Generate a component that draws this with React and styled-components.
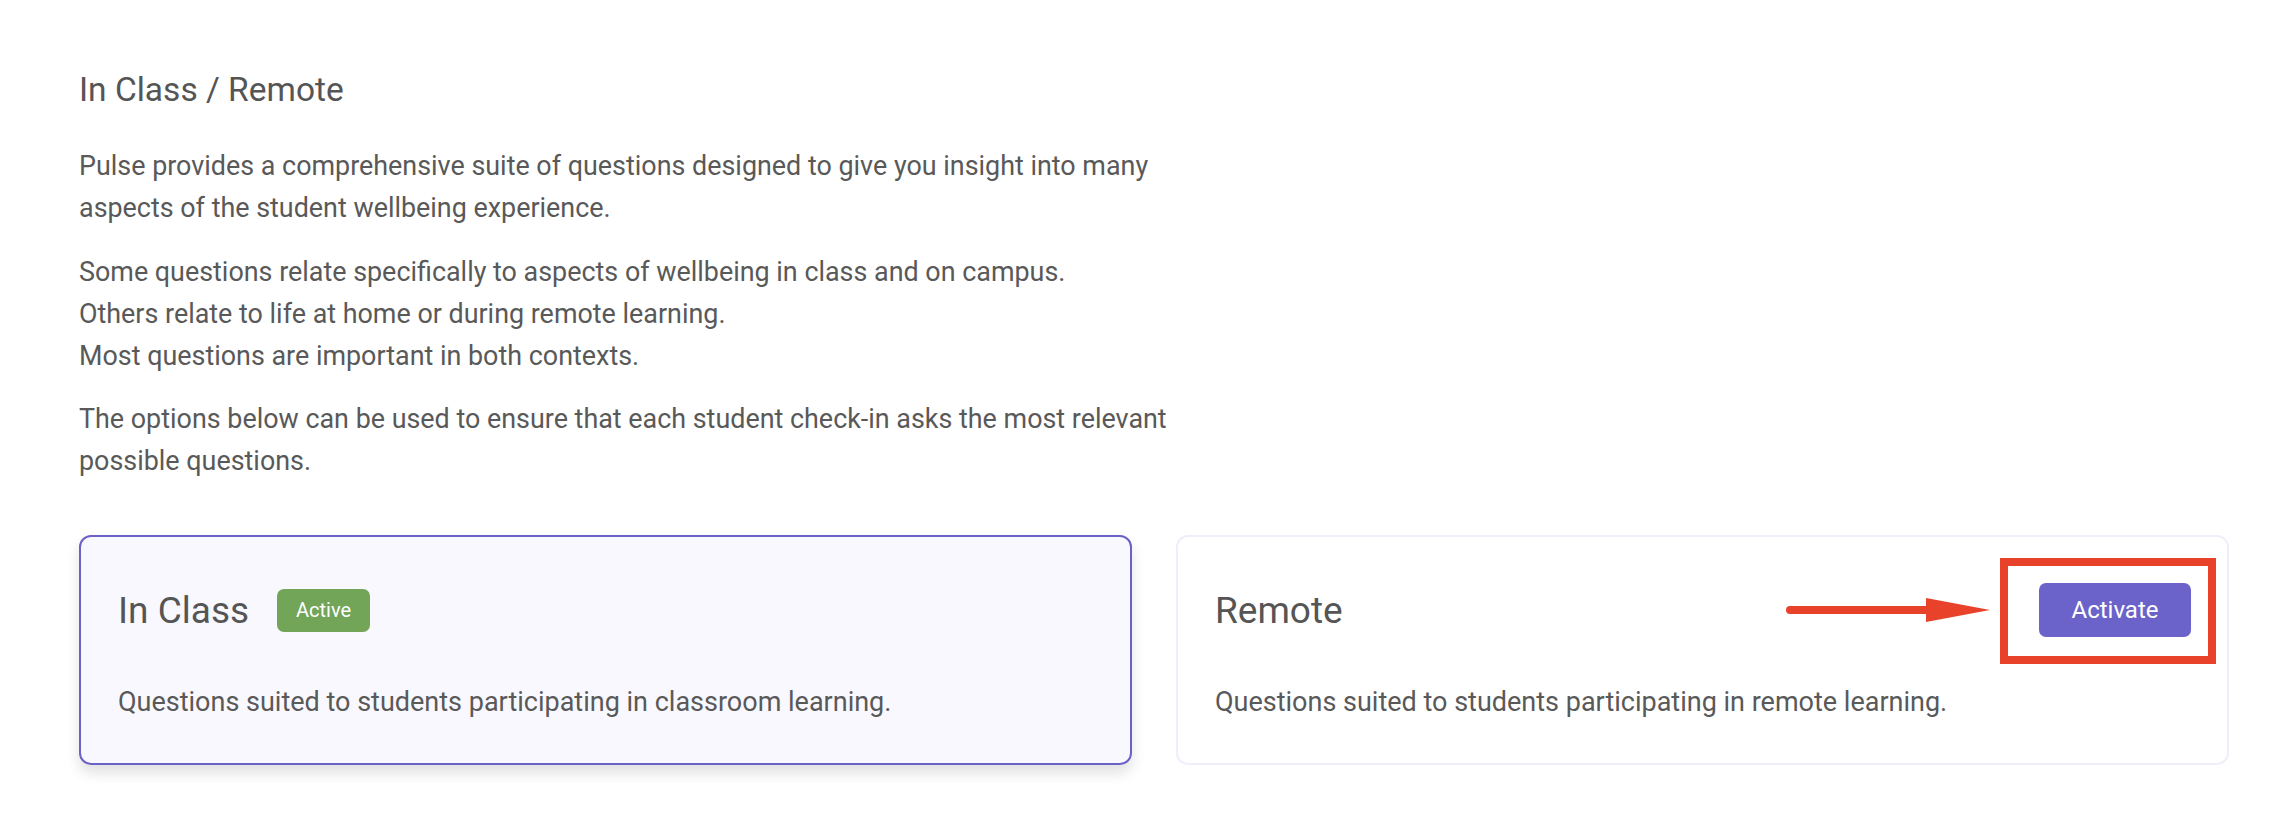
import React from 'react';
import styled, { createGlobalStyle } from 'styled-components';

const GlobalStyle = createGlobalStyle`
	html, body {
		margin: 0;
		padding: 0;
		background: #ffffff;
	}

	body {
		font-family: Roboto, 'Noto Sans', sans-serif;
		color: #575757;
	}
`;

const App = () => {
	return (
		<>
			<GlobalStyle />
			<Page>
				<Title>In Class / Remote</Title>
				<Intro>
					<Paragraph>
						Pulse provides a comprehensive suite of questions designed to give
						you insight into many aspects of the student wellbeing experience.
					</Paragraph>
					<Paragraph>
						Some questions relate specifically to aspects of wellbeing in class
						and on campus.
						<br />
						Others relate to life at home or during remote learning.
						<br />
						Most questions are important in both contexts.
					</Paragraph>
					<Paragraph>
						The options below can be used to ensure that each student check-in
						asks the most relevant possible questions.
					</Paragraph>
				</Intro>
				<Options>
					<OptionCard active>
						<CardHeader>
							<CardTitle>In Class</CardTitle>
							<Badge>Active</Badge>
						</CardHeader>
						<CardText>
							Questions suited to students participating in classroom learning.
						</CardText>
					</OptionCard>
					<OptionCard>
						<CardHeader>
							<CardTitle>Remote</CardTitle>
							<Spacer />
							<ButtonSlot>
								<Arrow viewBox='0 0 204 26' aria-hidden='true'>
									<line
										x1='4'
										y1='13'
										x2='145'
										y2='13'
										stroke='#e8422a'
										strokeWidth='8'
										strokeLinecap='round'
									/>
									<polygon points='140,1 204,13 140,25' fill='#e8422a' />
								</Arrow>
								<Highlight />
								<ActivateButton>Activate</ActivateButton>
							</ButtonSlot>
						</CardHeader>
						<CardText>
							Questions suited to students participating in remote learning.
						</CardText>
					</OptionCard>
				</Options>
			</Page>
		</>
	);
};

const Page = styled.div`
	padding: 66px 59px 40px 79px;
`;

const Title = styled.h2`
	margin: 0 0 31px;
	font-size: 33.5px;
	font-weight: 400;
	line-height: 48px;
	color: #555555;
`;

const Intro = styled.div`
	max-width: 1130px;
`;

const Paragraph = styled.p`
	margin: 0 0 21.5px;
	font-size: 26.9px;
	line-height: 42px;
	color: #595959;
`;

const Options = styled.div`
	display: grid;
	grid-template-columns: 1fr 1fr;
	gap: 44px;
	margin-top: 53px;
`;

const OptionCard = styled.div`
	box-sizing: border-box;
	height: 230px;
	padding: 50px 36px 0 37px;
	border-radius: 12px;
	border: ${({ active }) => (active ? '2px solid #6a62c7' : '2px solid #efeefb')};
	background: ${({ active }) => (active ? '#f9f8fe' : '#ffffff')};
	box-shadow: ${({ active }) =>
		active ? '0 8px 14px rgba(0, 0, 0, 0.12)' : 'none'};
`;

const CardHeader = styled.div`
	display: flex;
	align-items: center;
	height: 46px;
`;

const CardTitle = styled.h3`
	margin: 0;
	font-size: 37px;
	font-weight: 400;
	color: #555555;
`;

const Badge = styled.span`
	display: inline-flex;
	align-items: center;
	justify-content: center;
	box-sizing: border-box;
	width: 93px;
	height: 43px;
	margin-left: 28px;
	border-radius: 7px;
	background: #72a557;
	color: #ffffff;
	font-size: 20px;
`;

const Spacer = styled.div`
	flex: 1;
`;

const ButtonSlot = styled.div`
	position: relative;
`;

const ActivateButton = styled.button`
	display: block;
	width: 152px;
	height: 54px;
	border: none;
	border-radius: 7px;
	background: #6b63c9;
	color: #ffffff;
	font-family: Roboto, 'Noto Sans', sans-serif;
	font-size: 24px;
	cursor: pointer;
`;

const Highlight = styled.div`
	position: absolute;
	left: -39px;
	top: -25px;
	width: 216px;
	height: 106px;
	box-sizing: border-box;
	border: 8px solid #e8422a;
	pointer-events: none;
`;

const Arrow = styled.svg`
	position: absolute;
	left: -253px;
	top: 14px;
	width: 204px;
	height: 26px;
`;

const CardText = styled.p`
	margin: 53px 0 0;
	font-size: 27px;
	line-height: 32px;
	color: #595959;
`;

export default App;
